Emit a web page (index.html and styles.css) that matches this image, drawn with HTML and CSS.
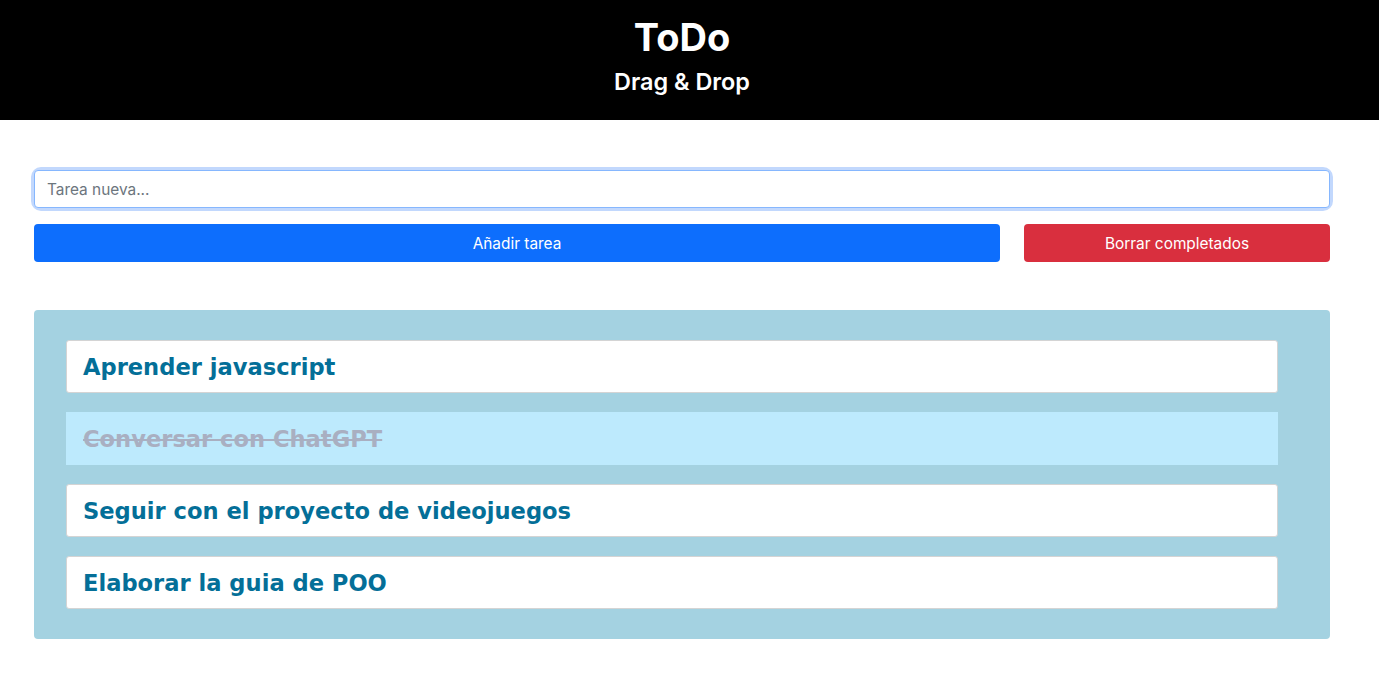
FILE: index.html
```html
<!DOCTYPE html>
<html lang="es">
<head>
<meta charset="utf-8">
<title>ToDo</title>
<link rel="stylesheet" href="styles.css">
</head>
<body>
<header class="hero">
  <h1 class="hero-title">ToDo</h1>
  <h2 class="hero-sub">Drag &amp; Drop</h2>
</header>
<main class="main">
  <div class="input-wrap"><input class="task-input" type="text" placeholder="Tarea nueva..."></div>
  <div class="actions">
    <button class="btn btn-primary">Añadir tarea</button>
    <button class="btn btn-danger">Borrar completados</button>
  </div>
  <ul class="task-list">
    <li class="task">Aprender javascript</li>
    <li class="task done">Conversar con ChatGPT</li>
    <li class="task">Seguir con el proyecto de videojuegos</li>
    <li class="task">Elaborar la guia de POO</li>
  </ul>
</main>
</body>
</html>
```
FILE: styles.css
```css
* { box-sizing: border-box; }
body {
  margin: 0;
  font-family: Inter, "Liberation Sans", sans-serif;
  background: #fff;
  color: #212529;
}
.hero {
  background: #000;
  color: #fff;
  height: 120px;
  display: flex;
  flex-direction: column;
  align-items: center;
  padding: 14px 15px 0 0;
}
.hero-title {
  margin: 0;
  font-size: 38px;
  font-weight: 700;
  line-height: 46px;
}
.hero-sub {
  margin: 0;
  font-size: 23.4px;
  font-weight: 600;
  line-height: 44px;
}
.main {
  padding: 50px 49px 0 34px;
}
.input-wrap {
  border-radius: 7px;
  box-shadow: 0 0 0 3px #c2d8fd;
}
.task-input {
  display: block;
  width: 100%;
  height: 38px;
  border: 1px solid #86b7fe;
  border-radius: 4px;
  padding: 0 12px;
  font-family: inherit;
  font-size: 15.4px;
  color: #212529;
  outline: none;
}
.task-input::placeholder { color: #6c757d; }
.actions {
  display: grid;
  grid-template-columns: 966px 306px;
  gap: 24px;
  margin-top: 16px;
}
.btn {
  height: 38px;
  border: none;
  border-radius: 4px;
  color: #fff;
  font-family: inherit;
  font-size: 15.4px;
}
.btn-primary { background: #0d6efd; }
.btn-danger { background: #d92f3e; }
.task-list {
  list-style: none;
  margin: 48px 0 0;
  padding: 30px 52px 30px 32px;
  background: #a4d2e1;
  border-radius: 4px;
  display: flex;
  flex-direction: column;
  gap: 19px;
}
.task {
  height: 53px;
  display: flex;
  align-items: center;
  padding: 0 16px;
  background: #fff;
  border: 1px solid #d4d4d4;
  border-radius: 3px;
  font-family: "DejaVu Sans", sans-serif;
  font-weight: 700;
  font-size: 22.6px;
  color: #046f98;
}
.task.done {
  background: #bdeafd;
  border-color: #bdeafd;
  border-radius: 0;
  color: #a9afc1;
  text-decoration: line-through;
}
```
